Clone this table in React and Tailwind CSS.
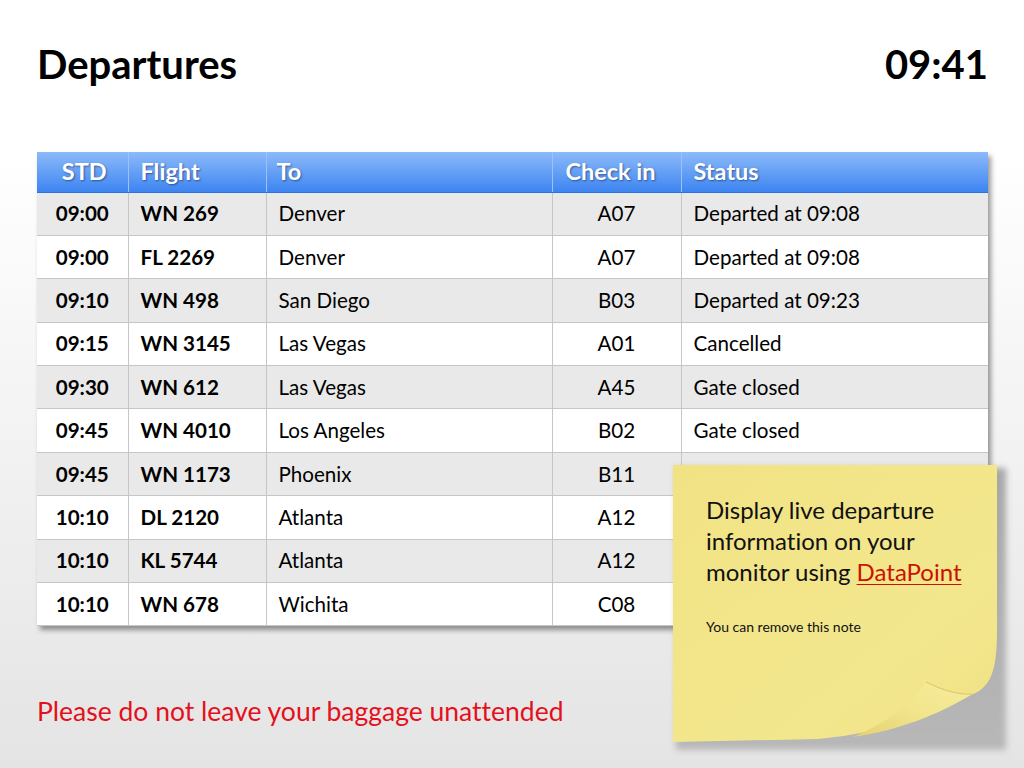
import React from "react";

const rows = [
  ["09:00", "WN 269", "Denver", "A07", "Departed at 09:08"],
  ["09:00", "FL 2269", "Denver", "A07", "Departed at 09:08"],
  ["09:10", "WN 498", "San Diego", "B03", "Departed at 09:23"],
  ["09:15", "WN 3145", "Las Vegas", "A01", "Cancelled"],
  ["09:30", "WN 612", "Las Vegas", "A45", "Gate closed"],
  ["09:45", "WN 4010", "Los Angeles", "B02", "Gate closed"],
  ["09:45", "WN 1173", "Phoenix", "B11", ""],
  ["10:10", "DL 2120", "Atlanta", "A12", ""],
  ["10:10", "KL 5744", "Atlanta", "A12", ""],
  ["10:10", "WN 678", "Wichita", "C08", ""],
];

function StickyNote() {
  return (
    <div className="absolute left-[668px] top-[460px] w-[345px] h-[300px]">
      <svg width="345" height="300" className="absolute left-0 top-0">
        <defs>
          <filter id="blur" x="-10%" y="-10%" width="120%" height="120%">
            <feGaussianBlur stdDeviation="3" />
          </filter>
          <linearGradient id="noteG" x1="0" y1="0" x2="1" y2="1">
            <stop offset="0" stopColor="#f1e384" />
            <stop offset="0.7" stopColor="#f3e78e" />
            <stop offset="1" stopColor="#efe082" />
          </linearGradient>
          <linearGradient id="foldG" x1="1" y1="0" x2="0" y2="1">
            <stop offset="0" stopColor="#f6ec9e" />
            <stop offset="0.5" stopColor="#f2e58c" />
            <stop offset="1" stopColor="#e4d172" />
          </linearGradient>
          <linearGradient id="shG" x1="0" y1="0" x2="0" y2="1">
            <stop offset="0" stopColor="#9a9a9a" />
            <stop offset="1" stopColor="#b0b0b0" />
          </linearGradient>
        </defs>
        <rect x="8" y="8" width="330" height="282" fill="url(#shG)" filter="url(#blur)" opacity="0.85" />
        <path
          d="M5,5 L329,5 L329,172 C329,212 322,228 303,235 C268,254 220,272 150,279 L5,282 Z"
          fill="url(#noteG)"
        />
        <path
          d="M258,222 C276,231 292,235 304,234 C272,254 232,270 185,277 C220,262 243,245 258,222 Z"
          fill="url(#foldG)"
        />
        <path d="M258,222 C276,231 292,235 304,234" fill="none" stroke="#d8c766" strokeWidth="1" />
      </svg>
      <div className="relative pl-[38px] pt-[34px] pr-[6px] font-['Lato','Open_Sans',sans-serif] text-[#111]">
        <p className="text-[24px] leading-[31px] whitespace-nowrap">
          Display live departure
          <br />
          information on your
          <br />
          monitor using <span className="text-[#cc1100] underline underline-offset-[3px] decoration-1">DataPoint</span>
        </p>
        <p className="mt-[29px] text-[14px]">You can remove this note</p>
      </div>
    </div>
  );
}

export default function App() {
  return (
    <div className="relative w-[1024px] h-[768px] overflow-hidden bg-gradient-to-b from-white from-20% to-[#e4e4e4] font-['Lato','Open_Sans',sans-serif] text-black [font-variant-ligatures:none]">
      <div className="flex items-center justify-between pl-[37px] pr-[36px] pt-[38px] h-[90px]">
        <h1 className="text-[40px] font-bold leading-none">Departures</h1>
        <div className="text-[40px] font-bold leading-none">09:41</div>
      </div>

      <div className="ml-[37px] mt-[62px] w-[951px] shadow-[3px_4px_5px_rgba(0,0,0,0.4)]">
        <table className="w-full border-collapse table-fixed">
          <colgroup>
            <col className="w-[91px]" />
            <col className="w-[138px]" />
            <col className="w-[286px]" />
            <col className="w-[129px]" />
            <col className="w-[307px]" />
          </colgroup>
          <thead>
            <tr className="h-[40px] bg-gradient-to-b from-[#8cbaf9] to-[#3c84f1] text-white text-[23.5px] font-bold [text-shadow:1px_1px_2px_rgba(0,0,40,0.45)]">
              <th className="text-center pl-[4px] border-r border-[#9fc2f6] border-b border-b-[#2e72e0]">STD</th>
              <th className="text-left pl-[12px] border-r border-[#9fc2f6] border-b border-b-[#2e72e0]">Flight</th>
              <th className="text-left pl-[10px] border-r border-[#9fc2f6] border-b border-b-[#2e72e0]">To</th>
              <th className="text-center pr-[12px] border-r border-[#9fc2f6] border-b border-b-[#2e72e0]">Check in</th>
              <th className="text-left pl-[12px] border-b border-b-[#2e72e0]">Status</th>
            </tr>
          </thead>
          <tbody>
            {rows.map((r, i) => (
              <tr key={i} className={`h-[43.4px] text-[20.6px] ${i % 2 === 0 ? "bg-[#e9e9e9]" : "bg-white"}`}>
                <td className="text-center font-bold border border-[#c6c6c6] border-l-0">{r[0]}</td>
                <td className="pl-[12px] font-bold border border-[#c6c6c6]">{r[1]}</td>
                <td className="pl-[12px] border border-[#c6c6c6]">{r[2]}</td>
                <td className="text-center border border-[#c6c6c6]">{r[3]}</td>
                <td className="pl-[12px] border border-[#c6c6c6] border-r-0">{r[4]}</td>
              </tr>
            ))}
          </tbody>
        </table>
      </div>

      <p className="absolute left-[37px] top-[698px] text-[26.5px] leading-none text-[#e4101c]">
        Please do not leave your baggage unattended
      </p>

      <StickyNote />
    </div>
  );
}
